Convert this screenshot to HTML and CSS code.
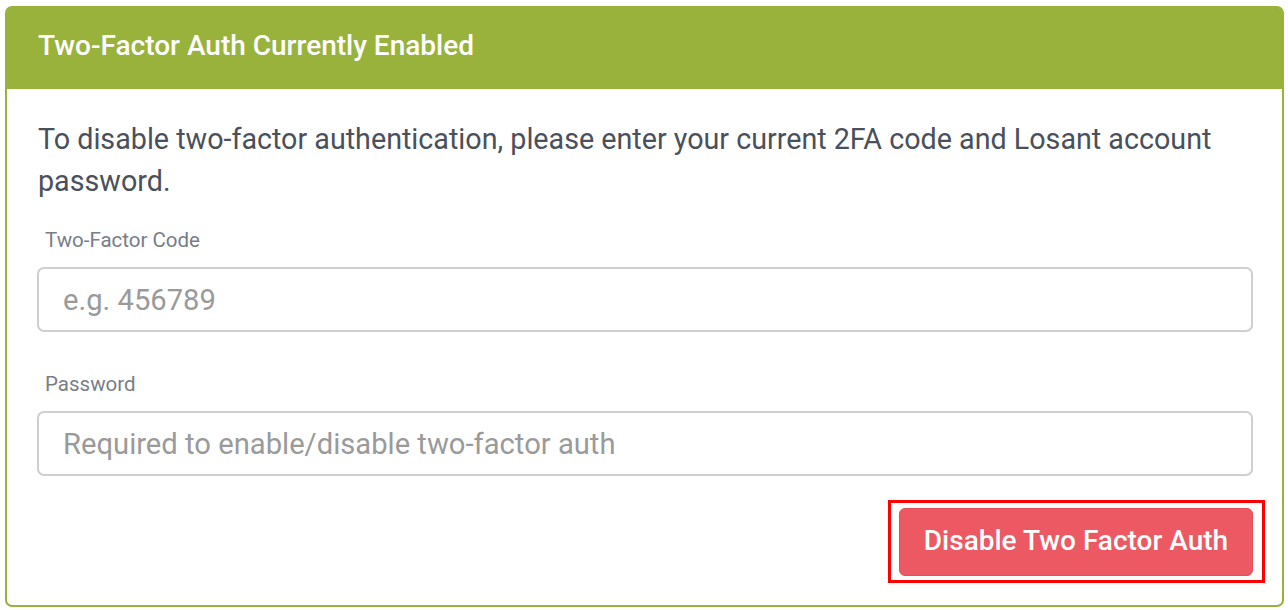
FILE: index.html
```html
<!DOCTYPE html>
<html>
<head>
<meta charset="utf-8">
<link rel="stylesheet" href="styles.css">
</head>
<body>
<div class="panel">
  <div class="panel-header">
    <h2 class="panel-title">Two-Factor Auth Currently Enabled</h2>
  </div>
  <div class="panel-body">
    <p class="intro">To disable two-factor authentication, please enter your current 2FA code and Losant account password.</p>
    <div class="form-group first">
      <label class="field-label" for="code">Two-Factor Code</label>
      <input class="field-input" id="code" type="text" placeholder="e.g. 456789">
    </div>
    <div class="form-group">
      <label class="field-label" for="pw">Password</label>
      <input class="field-input" id="pw" type="password" placeholder="Required to enable/disable two-factor auth">
    </div>
    <div class="actions">
      <button class="btn-danger" type="button">Disable Two Factor Auth<span class="highlight"></span></button>
    </div>
  </div>
</div>
</body>
</html>
```
FILE: styles.css
```css
* { box-sizing: border-box; }
html, body { margin: 0; padding: 0; background: #ffffff; }
body {
  font-family: Roboto, "Liberation Sans", sans-serif;
  padding: 6px 4px 0 5px;
}
.panel {
  width: 1279px;
  border: 2px solid #98b23c;
  border-radius: 7px;
  background: #ffffff;
}
.panel-header {
  background: #98b23c;
  height: 81px;
  padding: 18px 0 0 31px;
  border-radius: 4px 4px 0 0;
}
.panel-title {
  margin: 0;
  font-size: 28px;
  line-height: 40px;
  font-weight: 500;
  color: #ffffff;
}
.panel-body {
  padding: 29px 29px 29px 30px;
}
.intro {
  margin: 0 0 0 1px;
  font-size: 28.7px;
  line-height: 42px;
  color: #4a505b;
}
.form-group { margin-top: 38px; }
.form-group.first { margin-top: 24px; }
.field-label {
  display: block;
  padding-left: 8px;
  font-size: 20.5px;
  line-height: 28px;
  color: #787d86;
  margin-bottom: 13px;
}
.field-input {
  display: block;
  width: 100%;
  height: 65px;
  border: 2px solid #cfcfcf;
  border-radius: 7px;
  padding: 0 24px;
  font-family: inherit;
  font-size: 29.2px;
  color: #4a505b;
  background: #ffffff;
  outline: none;
}
.field-input::placeholder { color: #9a9a9a; }
.actions {
  display: flex;
  justify-content: flex-end;
  margin-top: 32px;
}
.btn-danger {
  position: relative;
  width: 354px;
  height: 68px;
  border: 1px solid #e64d57;
  border-radius: 6px;
  background: #ec5963;
  color: #ffffff;
  font-family: inherit;
  font-size: 28px;
  font-weight: 500;
  padding: 0 0 3px;
}
.highlight {
  position: absolute;
  left: -12px;
  top: -9px;
  right: -13px;
  bottom: -8px;
  border: 3px solid #ff0000;
  pointer-events: none;
}
```
